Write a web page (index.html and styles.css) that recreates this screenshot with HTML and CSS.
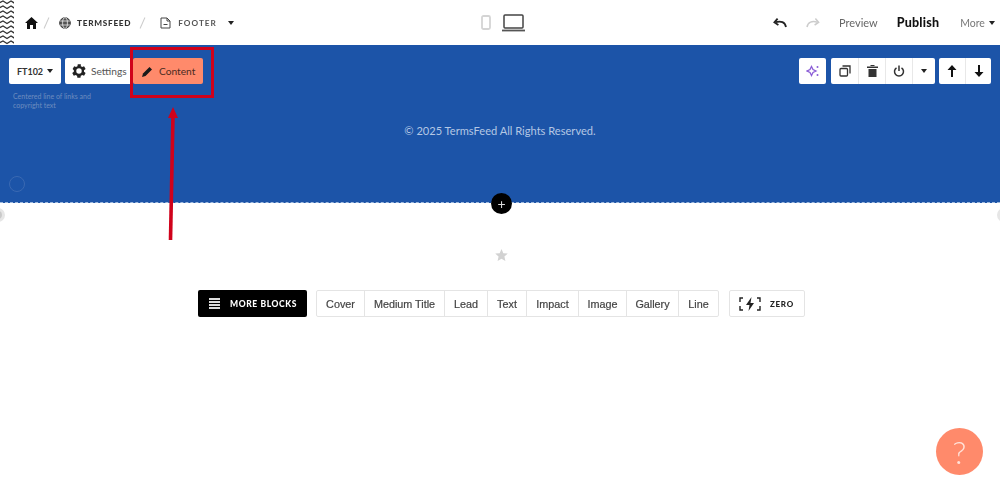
FILE: index.html
```html
<!DOCTYPE html>
<html lang="en">
<head>
    <meta charset="UTF-8">
    <meta name="viewport" content="width=device-width, initial-scale=1.0">
    <title>Footer - TermsFeed</title>
    <link rel="stylesheet" href="styles.css">
</head>
<body>

    <header class="topbar">
        <svg class="zigzag" width="14" height="45" viewBox="0 0 14 45">
            <defs>
                <pattern id="zig" width="14" height="5" patternUnits="userSpaceOnUse">
                    <path d="M-1 3 L3 1 L7 3.500 L11 1 L15 3.500" fill="none" stroke="#333" stroke-width="1.300"/>
                </pattern>
            </defs>
            <rect width="14" height="45" fill="url(#zig)"/>
        </svg>

        <nav class="crumbs">
            <svg class="crumb-home" width="13" height="12" viewBox="0 0 13 12"><path d="M6.500 0 L13 6 H11 V12 H8 V8 H5 V12 H2 V6 H0 Z" fill="#111"/></svg>
            <span class="slash"></span>
            <svg class="crumb-globe" width="12" height="12" viewBox="0 0 12 12" fill="none" stroke="#333" stroke-width="1"><circle cx="6" cy="6" r="5.300" fill="#555"/><ellipse cx="6" cy="6" rx="2.400" ry="5.300" stroke="#fff" stroke-width=".7"/><path d="M1 4H11M1 8H11" stroke="#fff" stroke-width=".7"/></svg>
            <span class="crumb-text">TERMSFEED</span>
            <span class="slash slash-two"></span>
            <svg class="crumb-page" width="11" height="12" viewBox="0 0 11 12" fill="none" stroke="#444" stroke-width="1"><path d="M1 1 H7 L10 4 V11 H1 Z M7 1 V4 H10 M3.500 7.500 H7.500"/></svg>
            <span class="crumb-text crumb-footer">FOOTER</span>
            <span class="caret caret-top"></span>
        </nav>

        <div class="devices">
            <svg width="10" height="15" viewBox="0 0 10 15"><rect x="1" y="1" width="8" height="13" rx="1.500" fill="none" stroke="#d4d4d4" stroke-width="1.800"/></svg>
            <svg width="23" height="18" viewBox="0 0 23 18" fill="none"><rect x="2" y="1" width="19" height="13" rx="1" stroke="#444" stroke-width="1.500"/><path d="M0 16.500 H23" stroke="#555" stroke-width="1.800"/></svg>
        </div>

        <div class="actions">
            <svg width="14" height="10" viewBox="0 0 14 10" fill="none" stroke="#222" stroke-width="1.800"><path d="M13 9 C12 4 8 2.600 2.500 4.200"/><path d="M4.600 .6 L1.400 4.400 L5.400 7"/></svg>
            <svg class="redo" width="14" height="10" viewBox="0 0 14 10" fill="none" stroke="#ccc" stroke-width="1.500"><path d="M1 9 C2 4 6 2.600 11.500 4.200"/><path d="M9.400 .6 L12.600 4.400 L8.600 7"/></svg>
            <span class="preview">Preview</span>
            <span class="publish">Publish</span>
            <span class="more">More</span>
            <span class="caret"></span>
        </div>
    </header>

    <section class="block">
        <div class="block-tools">
            <div class="tool-col">
                <div class="tool-row">
                    <button class="btn btn-code">FT102<span class="caret"></span></button>
                    <button class="btn btn-settings">
                        <svg width="14" height="14" viewBox="3 3 18 18"><path fill="#222" d="M19.400 13a7.600 7.600 0 0 0 0-2l2.100-1.600-2-3.500-2.500 1a7.600 7.600 0 0 0-1.700-1L15.400 3.200h-4l-.4 2.700a7.600 7.600 0 0 0-1.700 1l-2.500-1-2 3.500L6.400 11a7.600 7.600 0 0 0 0 2l-2.100 1.600 2 3.500 2.500-1a7.600 7.600 0 0 0 1.700 1l.4 2.700h4l.4-2.700a7.600 7.600 0 0 0 1.700-1l2.500 1 2-3.500zM13 15.500a3.500 3.500 0 1 1 0-7 3.500 3.500 0 0 1 0 7z" transform="translate(-1 0)"/></svg>
                        Settings
                    </button>
                    <button class="btn btn-content">
                        <svg width="11" height="11" viewBox="0 0 11 11"><path d="M0 11 L1 7.500 L7.500 1 L10 3.500 L3.500 10 Z" fill="#1a1a1a"/></svg>
                        Content
                    </button>
                </div>
                <p class="block-note">Centered line of links and<br>copyright text</p>
            </div>
            <div class="tools-right">
                <div class="tool-group tool-magic">
                    <button class="icon-btn">
                        <svg width="14" height="14" viewBox="0 0 14 14" fill="none" stroke="#8a5cd6" stroke-width="1.300"><path d="M5.500 2.500 L7 5.500 L10 7 L7 8.500 L5.500 11.500 L4 8.500 L1 7 L4 5.500 Z"/><circle cx="11.500" cy="3" r="1" fill="#8a5cd6" stroke="none"/><circle cx="11.500" cy="11" r="1" fill="#8a5cd6" stroke="none"/></svg>
                    </button>
                </div>
                <div class="tool-group">
                    <button class="icon-btn">
                        <svg width="12" height="12" viewBox="0 0 12 12" fill="none" stroke="#333" stroke-width="1.300"><rect x="1" y="3.500" width="7.500" height="7.500" rx="1"/><path d="M3.500 1 H11 V8.500"/></svg>
                    </button>
                    <button class="icon-btn">
                        <svg width="11" height="12" viewBox="0 0 11 12"><path fill="#333" d="M0 1.500 H11 V3 H0 Z M3.500 0 H7.500 V1 H3.500 Z M1.500 4 H9.500 V12 H1.500 Z"/></svg>
                    </button>
                    <button class="icon-btn">
                        <svg width="12" height="12" viewBox="0 0 12 12" fill="none" stroke="#333" stroke-width="1.500"><path d="M3.500 2.800 A4.500 4.500 0 1 0 8.500 2.800 M6 .5 V6"/></svg>
                    </button>
                    <button class="icon-btn icon-narrow"><span class="caret"></span></button>
                </div>
                <div class="tool-group">
                    <button class="icon-btn icon-arrow">
                        <svg width="10" height="12" viewBox="0 0 10 12"><path fill="#111" d="M5 0 L9.500 5 H6 V12 H4 V5 H.5 Z"/></svg>
                    </button>
                    <button class="icon-btn icon-arrow">
                        <svg width="10" height="12" viewBox="0 0 10 12"><path fill="#111" d="M5 12 L9.500 7 H6 V0 H4 V7 H.5 Z"/></svg>
                    </button>
                </div>
            </div>
        </div>

        <p class="copyright">© 2025 TermsFeed All Rights Reserved.</p>
        <span class="block-dot"></span>
        <button class="add-btn">+</button>
    </section>

    <span class="handle handle-left"></span>
    <span class="handle handle-right"></span>

    <main class="picker">
        <svg class="star" width="13" height="12" viewBox="0 0 24 23"><path fill="#d2d2d2" d="M12 0 L15.500 8 L24 8.800 L17.600 14.500 L19.500 23 L12 18.500 L4.500 23 L6.400 14.500 L0 8.800 L8.500 8 Z"/></svg>

        <div class="picker-row">
            <button class="more-blocks">
                <span class="burger"><i></i><i></i><i></i><i></i></span>
                MORE BLOCKS
            </button>
            <div class="types">
                <span class="type type-cover">Cover</span>
                <span class="type type-medium">Medium Title</span>
                <span class="type type-lead">Lead</span>
                <span class="type type-text">Text</span>
                <span class="type type-impact">Impact</span>
                <span class="type type-image">Image</span>
                <span class="type type-gallery">Gallery</span>
                <span class="type type-line">Line</span>
            </div>
            <button class="zero">
                <svg width="22" height="14" viewBox="0 0 22 14" fill="none" stroke="#222" stroke-width="1.400"><path d="M4 1 H1 V5 M1 9 V13 H4 M18 1 H21 V5 M21 9 V13 H18"/><path d="M12.500 0 L7 8 H10.500 L9.500 14 L15 6 H11.500 Z" fill="#222" stroke="none"/></svg>
                ZERO
            </button>
        </div>
    </main>

    <!-- red markup drawn over the screenshot -->
    <div class="mark-box"></div>
    <svg class="mark-arrow" width="14" height="134" viewBox="0 0 14 134">
        <path d="M4.500 133 L7 8" stroke="#d0021b" stroke-width="3.600" fill="none"/>
        <path d="M7 0 L12 11 H2 Z" fill="#d0021b"/>
    </svg>

    <button class="help">?</button>

</body>
</html>
```

FILE: styles.css
```css
* {
    box-sizing: border-box;
}

html, body {
    height: 100%;
}

/* the source capture is soft, so everything gets a slight blur */
body {
    margin: 0;
    position: relative;
    overflow: hidden;
    background: white;
    font-family: Lato, "Open Sans", sans-serif;
    color: #222;
    filter: blur(0.45px);
}

button {
    font-family: inherit;
    border: none;
    padding: 0;
}

.caret {
    display: inline-block;
    width: 0;
    height: 0;
    border-left: 3.5px solid transparent;
    border-right: 3.5px solid transparent;
    border-top: 4px solid #222;
}

/* top bar */
.topbar {
    height: 45px;
    display: flex;
    align-items: center;
    position: relative;
    background: white;
}

.zigzag {
    flex: none;
}

.crumbs {
    display: flex;
    align-items: center;
    margin-left: 11px;
    width: 440px;
}

.slash {
    width: 1px;
    height: 12px;
    margin: 0 12px 0 8px;
    background: #ccc;
    transform: rotate(24deg);
}

.slash-two {
    margin: 0 17px 0 11px;
}

.crumb-text {
    margin-left: 6px;
    font-size: 8.2px;
    font-weight: 900;
    letter-spacing: .75px;
    color: #333;
}

.crumb-footer {
    margin-left: 7px;
    font-weight: 700;
    letter-spacing: 1px;
    color: #555;
}

.caret-top {
    margin-left: 11px;
}

.devices {
    display: flex;
    align-items: center;
    gap: 11px;
    width: 290px;
    margin-left: 16px;
}

.actions {
    display: flex;
    align-items: center;
    margin-left: 2px;
}

.redo {
    margin-left: 19px;
}

.preview {
    margin-left: 19px;
    font-size: 11px;
    color: #666;
}

.publish {
    margin-left: 19px;
    font-size: 12.5px;
    font-weight: 900;
    letter-spacing: .2px;
    color: #111;
}

.more {
    margin: 0 4px 0 21px;
    font-size: 10.5px;
    color: #777;
}

/* blue block */
.block {
    height: 158px;
    position: relative;
    background: #1c54a8;
    border-bottom: 1px dashed #9db8dc;
}

.block-tools {
    display: flex;
    justify-content: space-between;
    padding: 13px 9px 0;
}

.tool-row {
    display: flex;
    gap: 4px;
}

.btn {
    height: 26px;
    display: flex;
    align-items: center;
    background: white;
    border-radius: 2px;
    font-size: 10.2px;
    color: #555;
}

.btn-code {
    width: 52px;
    justify-content: center;
    gap: 4px;
    font-weight: 700;
    font-size: 9px;
    color: #333;
}

.btn-settings {
    width: 68px;
    gap: 5px;
    padding-left: 7px;
    border-radius: 2px 0 0 2px;
}

.btn-content {
    width: 70px;
    gap: 6px;
    padding-left: 9px;
    margin-left: -4px;
    background: #ff8a6b;
    color: #4a2a22;
}

.block-note {
    margin: 8px 0 0 4px;
    font-size: 7px;
    line-height: 8.5px;
    color: #6d8dbf;
}

.tools-right {
    display: flex;
    gap: 4px;
}

.tool-magic {
    margin-right: 1px;
}

.tool-group {
    display: flex;
    height: 26px;
    background: white;
    border-radius: 2px;
}

.icon-btn {
    width: 27px;
    display: flex;
    align-items: center;
    justify-content: center;
    background: none;
    border-left: 1px solid #e8e8e8;
}

.icon-btn:first-child {
    border-left: none;
}

.icon-narrow {
    width: 23px;
}

.icon-arrow {
    width: 26px;
}

.copyright {
    margin: 15px 0 0;
    text-align: center;
    font-size: 11.1px;
    color: #b4c7e4;
}

.block-dot {
    position: absolute;
    left: 9px;
    top: 131px;
    width: 16px;
    height: 16px;
    border: 1px solid #3a69b2;
    border-radius: 50%;
}

.add-btn {
    position: absolute;
    left: 491px;
    top: 148px;
    width: 21px;
    height: 21px;
    border-radius: 50%;
    background: black;
    color: #ddd;
    font-size: 14px;
    line-height: 20px;
}

.handle {
    position: absolute;
    top: 208px;
    width: 14px;
    height: 14px;
    border-radius: 50%;
    background: #c9c9c9;
    border: 3px solid #e6e6e6;
}

.handle-left {
    left: -9px;
}

.handle-right {
    right: -11px;
}

/* block picker */
.picker {
    display: flex;
    flex-direction: column;
    align-items: center;
    padding-top: 46px;
}

.star {
    margin-left: 2px;
}

.picker-row {
    display: flex;
    align-items: center;
    margin-top: 29px;
    margin-left: 3px;
}

.more-blocks {
    width: 109px;
    height: 27px;
    display: flex;
    align-items: center;
    gap: 10px;
    padding-left: 11px;
    background: black;
    color: white;
    border-radius: 2px;
    font-size: 8.5px;
    font-weight: 900;
    letter-spacing: .6px;
}

.burger {
    display: flex;
    flex-direction: column;
    gap: 1.3px;
}

.burger i {
    display: block;
    width: 11px;
    height: 2px;
    background: #ddd;
}

.types {
    display: flex;
    height: 27px;
    margin-left: 9px;
    border: 1px solid #e4e4e4;
    border-radius: 2px;
}

.type {
    display: flex;
    align-items: center;
    justify-content: center;
    border-left: 1px solid #e4e4e4;
    font-family: "Liberation Sans", Arial, sans-serif;
    font-size: 10.8px;
    color: #444;
    -webkit-text-stroke: 0.2px #444;
}

.type:first-child {
    border-left: none;
}

.type-cover { width: 47px; }
.type-medium { width: 80px; }
.type-lead { width: 43px; }
.type-text { width: 39px; }
.type-impact { width: 52px; }
.type-image { width: 48px; }
.type-gallery { width: 52px; }
.type-line { width: 40px; }

.zero {
    width: 76px;
    height: 27px;
    display: flex;
    align-items: center;
    gap: 9px;
    margin-left: 10px;
    padding-left: 9px;
    background: white;
    border: 1px solid #e4e4e4;
    border-radius: 2px;
    font-size: 8px;
    font-weight: 900;
    letter-spacing: .7px;
    color: #222;
}

/* annotation */
.mark-box {
    position: absolute;
    left: 130px;
    top: 47px;
    width: 84px;
    height: 51px;
    border: 3px solid #d0021b;
}

.mark-arrow {
    position: absolute;
    left: 166px;
    top: 107px;
}

.help {
    position: absolute;
    left: 936px;
    top: 428px;
    width: 47px;
    height: 47px;
    border-radius: 50%;
    background: #ff8a6b;
    color: #ffe3da;
    font-size: 32px;
    font-weight: 300;
}
```
